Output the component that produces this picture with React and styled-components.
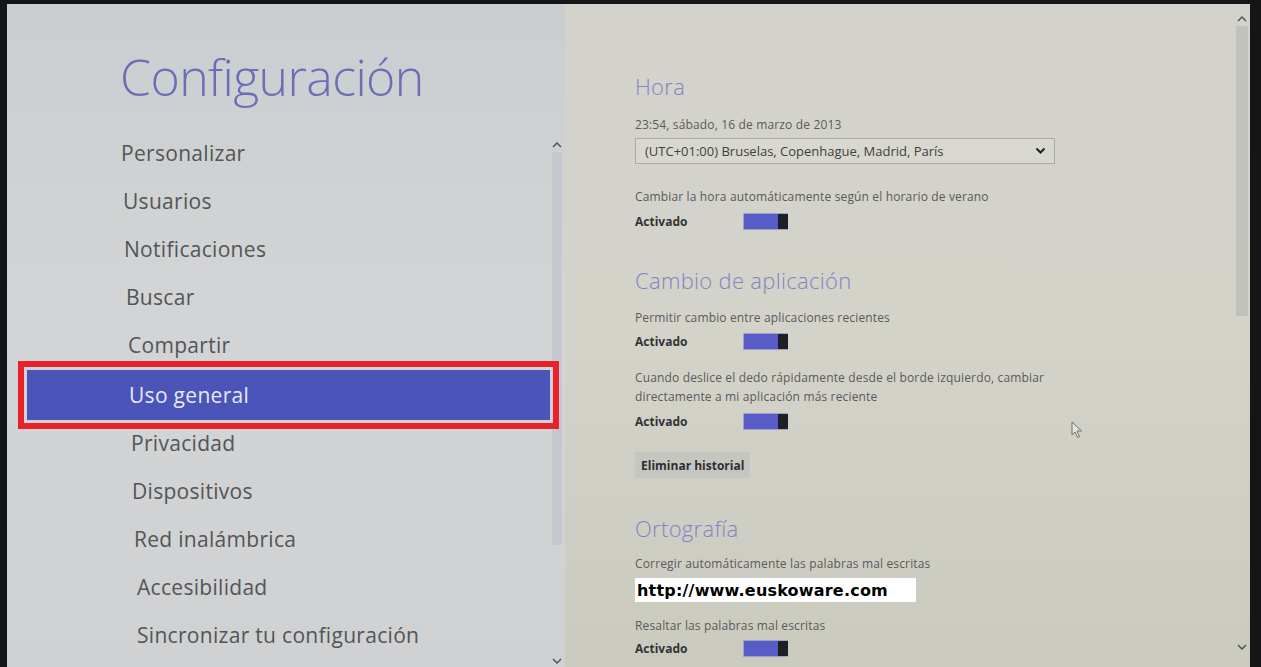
import React from "react";
import styled, { createGlobalStyle } from "styled-components";

const Global = createGlobalStyle`
  html, body { margin: 0; padding: 0; background: #141516; }
  body { font-family: "Open Sans", "Noto Sans", sans-serif; overflow: hidden; }
  * { box-sizing: border-box; }
`;

const Screen = styled.div`
  position: relative;
  display: flex;
  width: 1243px;
  height: 663px;
  margin: 4px 0 0 7px;
  overflow: hidden;
`;

const LeftPane = styled.div`
  width: 558px;
  flex-shrink: 0;
  display: flex;
  flex-direction: column;
  background: linear-gradient(180deg, #cbced0 0%, #d2d4d5 45%, #cfd1d2 100%);
`;

const Title = styled.h1`
  margin: 43px 0 0 113px;
  font-weight: 300;
  font-size: 50px;
  line-height: 60px;
  letter-spacing: -0.6px;
  color: #6b6eb6;
`;

const NavRow = styled.div`
  flex: 1;
  display: flex;
  margin-top: 22px;
`;

const Nav = styled.ul`
  list-style: none;
  margin: 0 0 0 20px;
  padding: 0;
  width: 523px;
  flex-shrink: 0;
  position: relative;
  z-index: 1;
`;

const NavItem = styled.li`
  height: ${(p) => (p.$active ? 50 : 48)}px;
  margin-bottom: ${(p) => (p.$active ? -1 : 0)}px;
  margin-top: ${(p) => (p.$active ? 1 : 0)}px;
  display: flex;
  align-items: center;
  padding-left: ${(p) => p.$indent}px;
  font-size: 21px;
  font-weight: 400;
  letter-spacing: 0.3px;
  color: ${(p) => (p.$active ? "#e8e9f6" : "#545556")};
  background: ${(p) => (p.$active ? "#4b54b8" : "transparent")};
  outline: ${(p) => (p.$active ? "6px solid #e8212b" : "none")};
  outline-offset: 3px;
`;

const VScroll = styled.div`
  width: 12px;
  flex-shrink: 0;
  margin-left: 1px;
  display: flex;
  flex-direction: column;
  align-items: center;
  padding-top: 9px;
`;

const Arrow = styled.div`
  width: 12px;
  height: 12px;
  display: flex;
  align-items: center;
  justify-content: center;
  color: #4b4c50;
`;

const Thumb = styled.div`
  width: ${(p) => p.$w}px;
  height: ${(p) => p.$h}px;
  background: ${(p) => p.$c};
  margin-top: 2px;
`;

const Spacer = styled.div`
  flex: 1;
`;

const RightPane = styled.div`
  flex: 1;
  display: flex;
  background: linear-gradient(180deg, #d3d3cc 0%, #d4d3ca 50%, #cbcabf 100%);
`;

const Content = styled.div`
  flex: 1;
  padding: 67px 0 0 70px;
  display: flex;
  flex-direction: column;
  align-items: flex-start;
`;

const Heading = styled.h2`
  margin: ${(p) => p.$mt || 0}px 0 0 0;
  font-weight: 300;
  font-size: 22px;
  line-height: 30px;
  color: #8184c2;
  letter-spacing: 0.3px;
`;

const Text = styled.p`
  margin: ${(p) => p.$mt || 0}px 0 0 0;
  font-size: 12px;
  line-height: 19px;
  letter-spacing: 0.15px;
  color: #5a5a5b;
  max-width: ${(p) => p.$max || 600}px;
`;

const Select = styled.div`
  margin-top: 4px;
  width: 420px;
  height: 26px;
  border: 1px solid #a9a9a6;
  background: #d8d8d1;
  display: flex;
  align-items: center;
  justify-content: space-between;
  padding: 0 8px 0 9px;
  font-size: 13px;
  color: #3f3f40;
`;

const ToggleRow = styled.div`
  margin-top: ${(p) => p.$mt}px;
  height: 18px;
  display: flex;
  align-items: center;
`;

const ToggleLabel = styled.span`
  width: ${(p) => p.$w}px;
  font-size: 12px;
  font-weight: 700;
  color: #333334;
`;

const Toggle = styled.div`
  width: 45px;
  height: 17px;
  display: flex;
  border: 1px solid #9ea1c9;
  border-right: none;
`;

const Track = styled.div`
  flex: 1;
  background: #585cc6;
`;

const Knob = styled.div`
  width: 10px;
  background: #1d2027;
`;

const Button = styled.div`
  margin-top: 22px;
  height: 26px;
  padding: 0 6px;
  display: flex;
  align-items: center;
  background: #c6c6c1;
  font-size: 12px;
  font-weight: 700;
  color: #2e2e30;
`;

const Watermark = styled.div`
  margin-top: 5px;
  width: 281px;
  height: 24px;
  background: #ffffff;
  display: flex;
  align-items: center;
  padding-left: 2px;
  font-family: "DejaVu Sans", "Noto Sans", sans-serif;
  font-weight: 700;
  font-size: 16px;
  letter-spacing: 0.2px;
  color: #000;
`;

const RightScroll = styled.div`
  width: 16px;
  display: flex;
  flex-direction: column;
  align-items: center;
  padding: 8px 0 14px;
`;

const Cursor = styled.svg`
  position: absolute;
  left: 1064px;
  top: 417px;
`;

const Up = () => (
  <svg width="10" height="7" viewBox="0 0 10 7">
    <path d="M1 6 L5 2 L9 6" fill="none" stroke="currentColor" strokeWidth="1.4" />
  </svg>
);
const Down = () => (
  <svg width="10" height="7" viewBox="0 0 10 7">
    <path d="M1 1 L5 5 L9 1" fill="none" stroke="currentColor" strokeWidth="1.4" />
  </svg>
);

const Switch = ({ mt }) => (
  <ToggleRow $mt={mt}>
    <ToggleLabel $w={108}>Activado</ToggleLabel>
    <Toggle>
      <Track />
      <Knob />
    </Toggle>
  </ToggleRow>
);

const items = [
  ["Personalizar", 94],
  ["Usuarios", 96],
  ["Notificaciones", 97],
  ["Buscar", 99],
  ["Compartir", 101],
  ["Uso general", 102],
  ["Privacidad", 104],
  ["Dispositivos", 105],
  ["Red inalámbrica", 107],
  ["Accesibilidad", 110],
  ["Sincronizar tu configuración", 110],
];

export default function App() {
  return (
    <>
      <Global />
      <Screen>
        <LeftPane>
          <Title>Configuración</Title>
          <NavRow>
            <Nav>
              {items.map(([label, indent]) => (
                <NavItem key={label} $indent={indent} $active={label === "Uso general"}>
                  {label}
                </NavItem>
              ))}
            </Nav>
            <VScroll>
              <Arrow>
                <Up />
              </Arrow>
              <Thumb $w={10} $h={393} $c="#c6c8d0" />
              <Spacer />
              <Arrow>
                <Down />
              </Arrow>
            </VScroll>
          </NavRow>
        </LeftPane>
        <RightPane>
          <Content>
            <Heading>Hora</Heading>
            <Text $mt={14}>23:54, sábado, 16 de marzo de 2013</Text>
            <Select>
              <span>(UTC+01:00) Bruselas, Copenhague, Madrid, París</span>
              <svg width="11" height="8" viewBox="0 0 11 8">
                <path d="M1.5 1.5 L5.5 5.5 L9.5 1.5" fill="none" stroke="#222" strokeWidth="2" />
              </svg>
            </Select>
            <Text $mt={23}>Cambiar la hora automáticamente según el horario de verano</Text>
            <Switch mt={6} />

            <Heading $mt={35}>Cambio de aplicación</Heading>
            <Text $mt={13}>Permitir cambio entre aplicaciones recientes</Text>
            <Switch mt={5} />
            <Text $mt={18} $max={430}>
              Cuando deslice el dedo rápidamente desde el borde izquierdo, cambiar directamente a mi
              aplicación más reciente
            </Text>
            <Switch mt={6} />
            <Button>Eliminar historial</Button>

            <Heading $mt={35}>Ortografía</Heading>
            <Text $mt={11}>Corregir automáticamente las palabras mal escritas</Text>
            <Watermark>http://www.euskoware.com</Watermark>
            <Text $mt={14}>Resaltar las palabras mal escritas</Text>
            <Switch mt={4} />
          </Content>
          <RightScroll>
            <Arrow>
              <Up />
            </Arrow>
            <Thumb $w={12} $h={290} $c="#c2c2bc" />
            <Spacer />
            <Arrow>
              <Down />
            </Arrow>
          </RightScroll>
        </RightPane>
        <Cursor width="12" height="18" viewBox="0 0 12 18">
          <path d="M1 1 L1 14 L4 11 L6.5 16.5 L8.5 15.5 L6 10 L10.5 10 Z" fill="#e4e4de" stroke="#6e6e6a" strokeWidth="1" />
        </Cursor>
      </Screen>
    </>
  );
}
